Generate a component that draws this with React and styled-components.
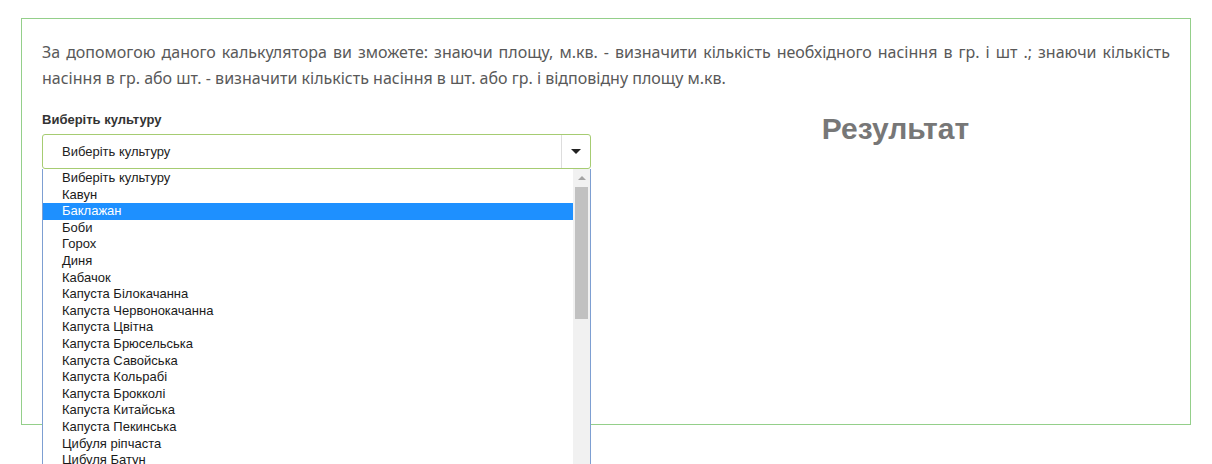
import React from "react";
import styled, { createGlobalStyle } from "styled-components";

const GlobalStyle = createGlobalStyle`
  html, body {
    margin: 0;
    padding: 0;
    overflow: hidden;
    background: #fff;
  }
  * {
    box-sizing: border-box;
  }
`;

const Page = styled.div`
  padding: 18px 0 0 21px;
  width: 1212px;
  height: 464px;
`;

const Calculator = styled.div`
  width: 1170px;
  height: 407px;
  border: 1px solid #94cf8a;
  padding: 20px 20px;
`;

const Intro = styled.p`
  margin: 0;
  font-family: "Noto Sans", "Open Sans", sans-serif;
  font-size: 16px;
  line-height: 26px;
  color: #595959;
  text-align: justify;
`;

const IntroLine = styled.span`
  display: block;
  white-space: nowrap;
  text-align: justify;
  text-align-last: ${(p) => (p.$full ? "justify" : "left")};
`;

const Columns = styled.div`
  display: grid;
  grid-template-columns: 1fr 1fr;
  column-gap: 30px;
  margin-top: 21px;
`;

const Field = styled.div`
  position: relative;
`;

const Label = styled.div`
  font-family: "Liberation Sans", Arial, sans-serif;
  font-weight: bold;
  font-size: 13px;
  line-height: 16px;
  color: #333;
  margin-bottom: 6px;
`;

const Select = styled.div`
  height: 35px;
  border: 1px solid #a6cc72;
  border-radius: 3px;
  display: flex;
  align-items: center;
  font-family: "Liberation Sans", Arial, sans-serif;
  font-size: 13px;
  color: #222;
`;

const SelectValue = styled.span`
  flex: 1;
  padding-left: 19px;
`;

const ArrowBox = styled.span`
  width: 29px;
  height: 100%;
  border-left: 1px solid #ddd;
  display: flex;
  align-items: center;
  justify-content: center;
`;

const Caret = styled.span`
  width: 0;
  height: 0;
  border-left: 5px solid transparent;
  border-right: 5px solid transparent;
  border-top: 5px solid #222;
`;

const Dropdown = styled.div`
  position: absolute;
  left: 0;
  right: 0;
  top: 57px;
  height: 420px;
  background: #fff;
  border: 1px solid #7d9fd2;
  border-top: none;
  display: flex;
  overflow: hidden;
`;

const Options = styled.ul`
  list-style: none;
  margin: 0;
  padding: 1px 0 0;
  flex: 1;
  font-family: "Liberation Sans", Arial, sans-serif;
  font-size: 13px;
  color: #1a1a1a;
`;

const Option = styled.li`
  height: 16.6px;
  line-height: 16px;
  padding-left: 19px;
  white-space: nowrap;
  background: ${(p) => (p.$active ? "#1e90ff" : "transparent")};
  color: ${(p) => (p.$active ? "#fff" : "inherit")};
`;

const Scrollbar = styled.div`
  width: 17px;
  background: #f1f1f1;
  display: flex;
  flex-direction: column;
  align-items: center;
`;

const UpArrow = styled.span`
  margin-top: 7px;
  width: 0;
  height: 0;
  border-left: 4px solid transparent;
  border-right: 4px solid transparent;
  border-bottom: 4px solid #a3a3a3;
`;

const Thumb = styled.div`
  margin-top: 7px;
  width: 13px;
  height: 132px;
  background: #c1c1c1;
`;

const Result = styled.h2`
  margin: 0;
  text-align: center;
  font-family: "Liberation Sans", Arial, sans-serif;
  font-weight: bold;
  font-size: 30px;
  line-height: 34px;
  color: #777;
`;

const crops = [
  "Виберіть культуру",
  "Кавун",
  "Баклажан",
  "Боби",
  "Горох",
  "Диня",
  "Кабачок",
  "Капуста Білокачанна",
  "Капуста Червонокачанна",
  "Капуста Цвітна",
  "Капуста Брюсельська",
  "Капуста Савойська",
  "Капуста Кольрабі",
  "Капуста Брокколі",
  "Капуста Китайська",
  "Капуста Пекинська",
  "Цибуля ріпчаста",
  "Цибуля Батун",
  "Цибуля Порей",
  "Часник",
  "Морква",
  "Буряк",
  "Огірок",
  "Перець",
  "Помідор",
];

const App = () => {
  return (
    <>
      <GlobalStyle />
      <Page>
        <Calculator>
          <Intro>
            <IntroLine $full>
              За допомогою даного калькулятора ви зможете: знаючи площу, м.кв. - визначити кількість
              необхідного насіння в гр. і шт .; знаючи кількість
            </IntroLine>
            <IntroLine>
              насіння в гр. або шт. - визначити кількість насіння в шт. або гр. і відповідну площу м.кв.
            </IntroLine>
          </Intro>
          <Columns>
            <Field>
              <Label>Виберіть культуру</Label>
              <Select>
                <SelectValue>Виберіть культуру</SelectValue>
                <ArrowBox>
                  <Caret />
                </ArrowBox>
              </Select>
              <Dropdown>
                <Options>
                  {crops.map((c, i) => (
                    <Option key={c} $active={i === 2}>
                      {c}
                    </Option>
                  ))}
                </Options>
                <Scrollbar>
                  <UpArrow />
                  <Thumb />
                </Scrollbar>
              </Dropdown>
            </Field>
            <Result>Результат</Result>
          </Columns>
        </Calculator>
      </Page>
    </>
  );
};

export default App;
